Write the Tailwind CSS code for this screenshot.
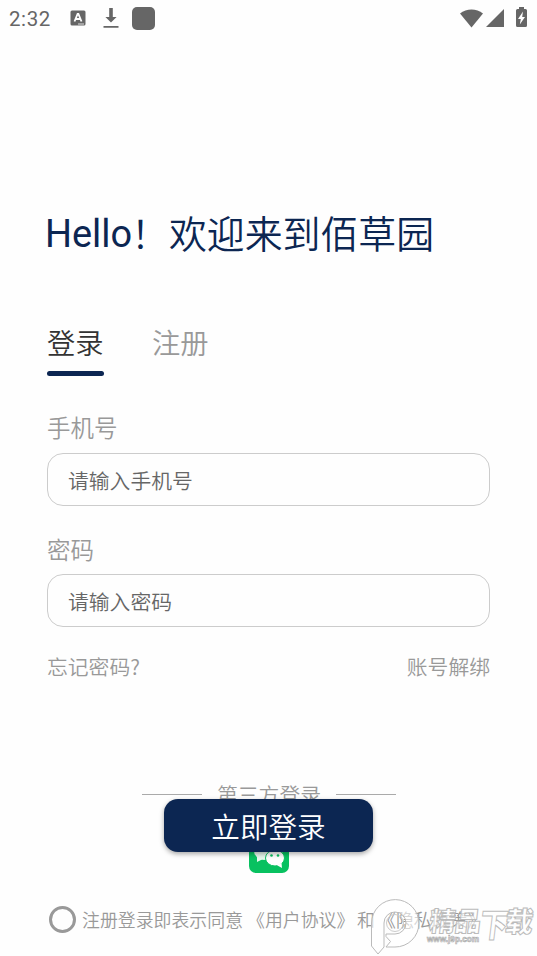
<!DOCTYPE html>
<html lang="zh-CN">
<head>
<meta charset="utf-8">
<title>登录</title>
<script src="https://cdn.jsdelivr.net/npm/@tailwindcss/browser@4"></script>
</head>
<body class="bg-[#fefefe] font-['Noto_Sans_CJK_SC',sans-serif] font-[350]">
<div class="relative w-[537px] h-[956px] overflow-hidden flex flex-col">

  <!-- status bar -->
  <header class="h-9 shrink-0 flex items-center pl-[9px] pr-[10px] text-[#666]">
    <span class="w-[61px] text-[20.5px] leading-9 font-normal font-['Roboto',sans-serif] tracking-[0.6px] pt-px">2:32</span>
    <svg class="w-4 h-4" viewBox="0 0 16 16"><rect x=".5" y=".5" width="15" height="15" rx="1.5" fill="#666"/><path d="M4.500 11.500 7.600 4h.8l3.100 7.500M5.800 9h4.400" fill="none" stroke="#fff" stroke-width="1.800"/><path d="M8 14h6" stroke="#fff" stroke-width=".8"/></svg>
    <svg class="w-4 h-5 ml-[17px]" viewBox="0 0 16 20"><path d="M6.200 0h3.600v9h3.800L8 14.600 2.400 9h3.800zM.5 18h15v1.700H.5z" fill="#666"/></svg>
    <span class="ml-[13px] w-[23px] h-[23px] rounded-[5px] bg-[#666]"></span>
    <span class="flex-1"></span>
    <svg class="w-[23px] h-[19px]" viewBox="0 0 23 19"><path d="M0 4.400C6.500-.8 16.500-.8 23 4.400L11.500 18.600z" fill="#666"/></svg>
    <svg class="w-[18px] h-[18px] ml-[3px]" viewBox="0 0 18 18"><path d="M18 0v18H0z" fill="#666"/></svg>
    <svg class="w-[11px] h-5 ml-3 -mt-0.5" viewBox="0 0 11 20"><path d="M3 0h5v2h1.500Q11 2 11 3.500v15Q11 20 9.500 20h-8Q0 20 0 18.500v-15Q0 2 1.500 2H3z" fill="#666"/><path d="M7 4.500 2 12h2.800l-1 5.500L9 10H6.200z" fill="#fff"/></svg>
  </header>

  <main class="px-[47px] flex flex-col">
    <h1 class="mt-[168px] -ml-[2px] h-14 leading-14 text-[37.9px] text-[#0c2652] whitespace-nowrap flex"><span class="font-['Roboto',sans-serif] font-normal w-[86px] pt-[2px]">Hello</span><span>！欢迎来到佰草园</span></h1>

    <nav class="mt-[62px] flex gap-12 text-[28.3px] leading-10">
      <div class="h-[54px] w-[57px] text-[#333] flex flex-col justify-between">登录<span class="h-[5px] rounded-full bg-[#0c2652]"></span></div>
      <div class="text-[#999]">注册</div>
    </nav>

    <label class="mt-[35px] h-8 leading-8 text-[23.5px] text-[#999]">手机号</label>
    <div class="mt-[10px] h-[53px] rounded-[16px] border border-[#ccc] px-5 text-[20.8px] leading-[52px] text-[#666]">请输入手机号</div>

    <label class="mt-[27px] h-8 leading-8 text-[23.5px] text-[#999]">密码</label>
    <div class="mt-[9px] h-[53px] rounded-[16px] border border-[#ccc] px-5 text-[20.8px] leading-[53px] text-[#666]">请输入密码</div>

    <div class="mt-[23px] h-8 leading-8 flex justify-between text-[20.8px] text-[#999]"><span>忘记密码?</span><span>账号解绑</span></div>

    <div class="mt-[96px] ml-[95px] w-[254px] h-8 leading-8 flex items-center justify-between text-[20.8px] text-[#999]">
      <span class="w-[60px] h-px bg-[#aaa]"></span><span>第三方登录</span><span class="w-[60px] h-px bg-[#aaa]"></span>
    </div>

    <svg class="mt-[23px] ml-[202px] w-10 h-10" viewBox="0 0 40 40">
      <rect width="40" height="40" rx="7" fill="#08c160"/>
      <ellipse cx="15" cy="18" rx="10" ry="9" fill="#e8f8ee"/><path d="M8 23v6l6-3z" fill="#e8f8ee"/>
      <ellipse cx="26" cy="25" rx="9.500" ry="8" fill="#fff" stroke="#08c160"/><path d="m28 32.300 5 2.700-.5-5z" fill="#fff"/>
      <circle cx="22.500" cy="22.500" r="1.300" fill="#08c160"/><circle cx="29" cy="22.500" r="1.300" fill="#08c160"/>
    </svg>

    <div class="mt-[30px] ml-[2px] h-8 leading-[34px] flex items-center whitespace-nowrap text-[17.9px] text-[#999]">
      <span class="w-[27px] h-[27px] rounded-full border-[3px] border-[#999] mr-[6px] shrink-0"></span>
      <span class="w-[165px]">注册登录即表示同意</span><span class="w-[110px]">《用户协议》</span><span class="w-[21px]">和</span><span>《隐私政策》</span>
    </div>
  </main>

  <button class="absolute left-[164px] top-[799px] w-[209px] h-[53px] rounded-[14px] bg-[#0c2652] text-white text-[28.6px] leading-[53px] shadow-[0_2px_5px_rgba(0,0,0,0.35)]">立即登录</button>

  <!-- download site badge -->
  <svg class="absolute left-[367px] top-[892px] w-[170px] h-16" viewBox="0 0 170 64">
    <path d="M4.500 54V31A23.700 23.700 0 1 1 28 55H19l4.500-5.500-4.500-5V42h9A11 11 0 1 0 17 31v24l-6 7z" fill="#fff" fill-opacity=".6" stroke="#bbb"/>
    <circle cx="28" cy="31" r="8.500" fill="none" stroke="#ccc"/>
    <g transform="skewX(-7)" font-family="Noto Sans CJK SC, sans-serif" font-weight="900" fill="#fff" fill-opacity=".65" stroke="#bbb" stroke-width="1">
      <text x="66" y="39" font-size="26.500" textLength="52">精品</text>
      <text x="117" y="45" font-size="33" textLength="28" lengthAdjust="spacingAndGlyphs">下</text>
      <text x="142" y="40" font-size="28">载</text>
    </g>
    <text x="60" y="50" font-family="Liberation Sans, sans-serif" font-size="9" font-weight="700" textLength="52" lengthAdjust="spacingAndGlyphs" fill="#fff" stroke="#aaa" stroke-width=".7">www.j9p.com</text>
  </svg>
</div>
</body>
</html>
